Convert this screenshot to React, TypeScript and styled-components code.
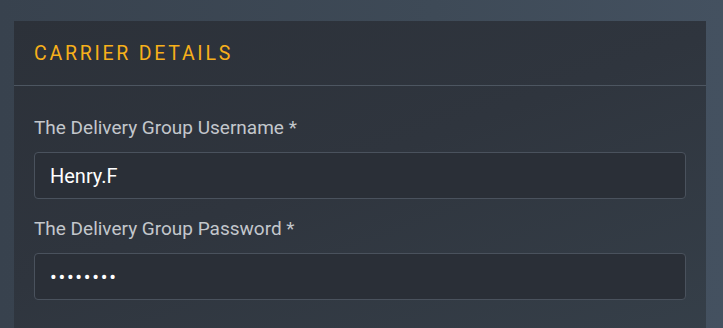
import React from 'react';
import styled, { createGlobalStyle } from 'styled-components';

const GlobalStyle = createGlobalStyle`
  html, body {
    margin: 0;
    padding: 0;
    background: linear-gradient(90deg, #38424e 0%, #3e4a57 60%, #445160 100%);
    font-family: Roboto, 'Liberation Sans', sans-serif;
    height: 100%;
  }
`;

const Page = styled.div`
  height: 328px;
  overflow: hidden;
  padding: 21px 17px 0 14px;
  box-sizing: border-box;
`;

const Card = styled.section`
  background: linear-gradient(160deg, #2c3139 0%, #2f353e 45%, #36404a 100%);
  min-height: 340px;
`;

const CardHeader = styled.header`
  height: 65px;
  box-sizing: border-box;
  border-bottom: 1px solid #4d5661;
  display: flex;
  align-items: center;
  padding: 0 20px;
`;

const Title = styled.h2`
  margin: 0;
  font-size: 19.5px;
  font-weight: 400;
  letter-spacing: 2.75px;
  color: #f7b01a;
  text-transform: uppercase;
`;

const CardBody = styled.div`
  padding: 30px 20px 0 20px;
  display: flex;
  flex-direction: column;
  gap: 18px;
`;

const Field = styled.div`
  display: flex;
  flex-direction: column;
  gap: 13px;
`;

const Label = styled.label`
  font-size: 19px;
  line-height: 23px;
  color: #c3c7cc;
`;

const Input = styled.input<{ $secret?: boolean }>`
  height: 47px;
  box-sizing: border-box;
  border: 1px solid #4a525d;
  border-radius: 4px;
  background: #2a2f37;
  color: #ffffff;
  font-family: Roboto, 'Liberation Sans', sans-serif;
  font-size: 20px;
  letter-spacing: ${(p) => (p.$secret ? '1.7px' : '0')};
  padding: 0 15px;
  outline: none;
  width: 100%;
`;

export default function App() {
  return (
    <>
      <GlobalStyle />
      <Page>
        <Card>
          <CardHeader>
            <Title>Carrier Details</Title>
          </CardHeader>
          <CardBody>
            <Field>
              <Label>The Delivery Group Username *</Label>
              <Input type="text" defaultValue="Henry.F" />
            </Field>
            <Field>
              <Label>The Delivery Group Password *</Label>
              <Input type="password" defaultValue="password" $secret />
            </Field>
          </CardBody>
        </Card>
      </Page>
    </>
  );
}
